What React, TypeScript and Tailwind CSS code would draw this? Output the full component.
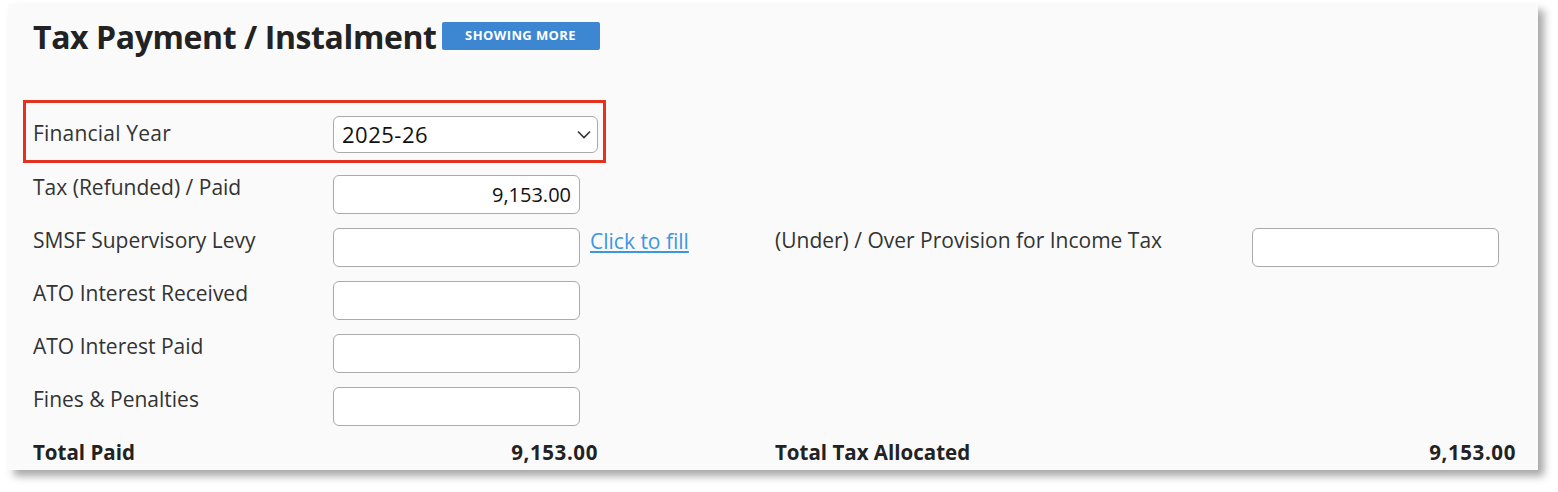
import React from 'react';

const font = { fontFamily: '"Open Sans", Lato, sans-serif' };

const Field = ({ value }: { value?: string }) => (
  <div className="w-[247px] h-[39px] rounded-[6px] border border-[#aaaaaa] bg-white flex items-center justify-end px-[8px] text-[20px] text-[#111]">
    {value}
  </div>
);

const rows = [
  { label: 'Tax (Refunded) / Paid', value: '9,153.00' },
  { label: 'SMSF Supervisory Levy', fill: true, right: '(Under) / Over Provision for Income Tax' },
  { label: 'ATO Interest Received' },
  { label: 'ATO Interest Paid' },
  { label: 'Fines & Penalties' },
];

export default function App() {
  return (
    <div className="w-[1558px] h-[492px] bg-white pt-[4px] pl-[8px]" style={font}>
      <div className="w-[1530px] h-[466px] bg-[#fafafa] shadow-[6px_6px_8px_rgba(0,0,0,0.35)] pl-[25px] pt-[14px] text-[#333]">
        <div className="flex items-center gap-[5px] h-[38px]">
          <h1 className="text-[32px] font-bold text-[#222] tracking-[-0.4px]">Tax Payment / Instalment</h1>
          <span className="mt-[-2px] w-[158px] h-[28px] rounded-[2px] bg-[#3d86d2] text-white text-[13px] font-bold flex items-center justify-center tracking-[0.4px]">
            SHOWING MORE
          </span>
        </div>

        <div className="mt-[44px] ml-[-10px] w-[583px] h-[63px] border-[3px] border-[#e3321f] flex items-center pl-[7px]">
          <span className="mt-[5px] w-[300px] text-[21px] tracking-[0.2px]">Financial Year</span>
          <div className="mt-[5px] w-[265px] h-[37px] rounded-[6px] border border-[#aaaaaa] bg-white flex items-center justify-between pl-[8px] pr-[6px] text-[22px] text-[#111]">
            <span className="tracking-[0.5px]">2025-26</span>
            <svg width="14" height="9" viewBox="0 0 14 9" fill="none" stroke="#333" strokeWidth="1.6">
              <path d="M1 1.5l6 6 6-6" />
            </svg>
          </div>
        </div>

        <div className="mt-[12px] flex flex-col gap-[14px]">
          {rows.map((r) => (
            <div key={r.label} className="flex items-start h-[39px]">
              <span className="w-[300px] text-[21px] leading-[24px]">{r.label}</span>
              <Field value={r.value} />
              <div className="w-[195px] pl-[10px] pt-[1px]">
                {r.fill && <span className="text-[21px] leading-[24px] text-[#3c97e3] underline">Click to fill</span>}
              </div>
              {r.right && (
                <>
                  <span className="w-[477px] text-[21px] leading-[24px]">{r.right}</span>
                  <Field />
                </>
              )}
            </div>
          ))}
        </div>

        <div className="mt-[11px] flex items-center text-[20.5px] font-bold text-[#222]">
          <div className="w-[565px] flex justify-between">
            <span>Total Paid</span>
            <span className="tracking-[0.6px]">9,153.00</span>
          </div>
          <div className="ml-[177px] w-[741px] flex justify-between">
            <span>Total Tax Allocated</span>
            <span className="tracking-[0.6px]">9,153.00</span>
          </div>
        </div>
      </div>
    </div>
  );
}
